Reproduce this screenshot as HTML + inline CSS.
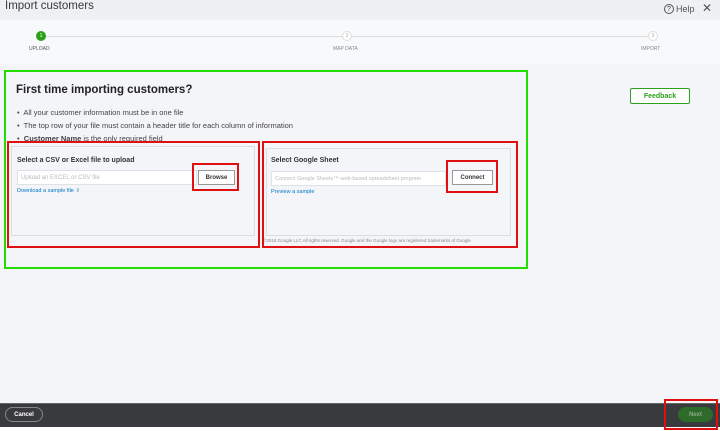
<!DOCTYPE html>
<html><head><style>
*{margin:0;padding:0;box-sizing:border-box}
body{width:720px;height:431px;position:relative;overflow:hidden;background:#f4f5f8;font-family:"Liberation Sans",sans-serif;color:#393a3d}
.a{position:absolute}
.c{display:flex;align-items:center;justify-content:center}
</style></head><body>
<div class="a" style="left:0;top:0;width:720px;height:20px;background:#eef0f3"></div>
<div class="a" style="left:5px;top:0px;font-size:11.5px;color:#393a3d">Import customers</div>
<div class="a c" style="left:664px;top:4px;width:10px;height:10px;border:1px solid #555;border-radius:50%;font-size:7px">?</div>
<div class="a" style="left:676px;top:4px;font-size:9px;color:#555">Help</div>
<div class="a" style="left:702px;top:1px;font-size:12px;color:#555">✕</div>
<div class="a" style="left:0;top:20px;width:720px;height:44px;background:#f8f9fa"></div>
<div class="a" style="left:40px;top:36px;width:612px;height:1px;background:#dcdde0"></div>
<div class="a c" style="left:36px;top:31px;width:10px;height:10px;border-radius:50%;background:#2ca01c;color:#fff;font-size:5px">1</div>
<div class="a c" style="left:342px;top:31px;width:10px;height:10px;border-radius:50%;background:#fff;border:1px solid #dcdde0;color:#aaa;font-size:5px">2</div>
<div class="a c" style="left:648px;top:31px;width:10px;height:10px;border-radius:50%;background:#fff;border:1px solid #dcdde0;color:#aaa;font-size:5px">3</div>
<div class="a" style="left:29px;top:46px;font-size:5px;color:#555">UPLOAD</div>
<div class="a" style="left:333px;top:46px;font-size:5px;color:#888">MAP DATA</div>
<div class="a" style="left:641px;top:46px;font-size:5px;color:#888">IMPORT</div>

<div class="a c" style="left:630px;top:88px;width:60px;height:16px;border:1px solid #2ca01c;background:#fff;border-radius:2px;font-size:7px;color:#2ca01c;font-weight:bold">Feedback</div>

<div class="a" style="left:4px;top:70px;width:524px;height:199px;border:2px solid #22dd00"></div>
<div class="a" style="left:16px;top:84px;font-size:11.5px;font-weight:bold;color:#222">First time importing customers?</div>
<div class="a" style="left:17px;top:106px;font-size:7.5px;line-height:13px;color:#444">
•&nbsp; All your customer information must be in one file<br>•&nbsp; The top row of your file must contain a header title for each column of information<br>•&nbsp; <b>Customer Name</b> is the only required field</div>

<div class="a" style="left:11px;top:146px;width:244px;height:90px;border:1px solid #dcdde0"></div>
<div class="a" style="left:17px;top:157px;font-size:7px;font-weight:bold;color:#333">Select a CSV or Excel file to upload</div>
<div class="a" style="left:17px;top:170px;width:180px;height:15px;background:#fff;border:1px solid #e0e1e4;font-size:6px;color:#bbb;padding:4px 3px">Upload an EXCEL or CSV file</div>
<div class="a c" style="left:198px;top:170px;width:37px;height:15px;background:#fff;border:1px solid #999;font-size:6px;color:#333;font-weight:bold">Browse</div>
<div class="a" style="left:17px;top:188px;font-size:5.5px;color:#0077c5">Download a sample file ⇩</div>

<div class="a" style="left:266px;top:148px;width:245px;height:88px;border:1px solid #dcdde0"></div>
<div class="a" style="left:271px;top:157px;font-size:7px;font-weight:bold;color:#333">Select Google Sheet</div>
<div class="a" style="left:271px;top:171px;width:175px;height:15px;background:#fff;border:1px solid #e0e1e4;font-size:5.5px;color:#bbb;padding:4px 3px;white-space:nowrap;overflow:hidden">Connect Google Sheets™ web-based spreadsheet program</div>
<div class="a c" style="left:452px;top:170px;width:41px;height:15px;background:#fff;border:1px solid #999;font-size:6px;color:#333;font-weight:bold">Connect</div>
<div class="a" style="left:271px;top:189px;font-size:5.5px;color:#0077c5">Preview a sample</div>
<div class="a" style="left:263px;top:238px;font-size:4.5px;color:#888;white-space:nowrap">©2018 Google LLC All rights reserved. Google and the Google logo are registered trademarks of Google</div>

<div class="a" style="left:7px;top:141px;width:253px;height:107px;border:2px solid #e01010"></div>
<div class="a" style="left:262px;top:141px;width:256px;height:107px;border:2px solid #e01010"></div>
<div class="a" style="left:192px;top:163px;width:47px;height:28px;border:2px solid #e01010"></div>
<div class="a" style="left:446px;top:160px;width:52px;height:33px;border:2px solid #e01010"></div>

<div class="a" style="left:0;top:403px;width:720px;height:24px;background:#393a3d;border-top:1px solid #666"></div>
<div class="a" style="left:0;top:427px;width:720px;height:4px;background:#fff"></div>
<div class="a c" style="left:5px;top:407px;width:38px;height:15px;border:1px solid #888;border-radius:8px;color:#fff;font-size:6px;font-weight:bold">Cancel</div>
<div class="a c" style="left:678px;top:407px;width:35px;height:15px;background:#2e6b2a;border-radius:8px;color:#8fa88c;font-size:6px;font-weight:bold">Next</div>
<div class="a" style="left:664px;top:399px;width:54px;height:31px;border:2px solid #e01010"></div>
</body></html>
